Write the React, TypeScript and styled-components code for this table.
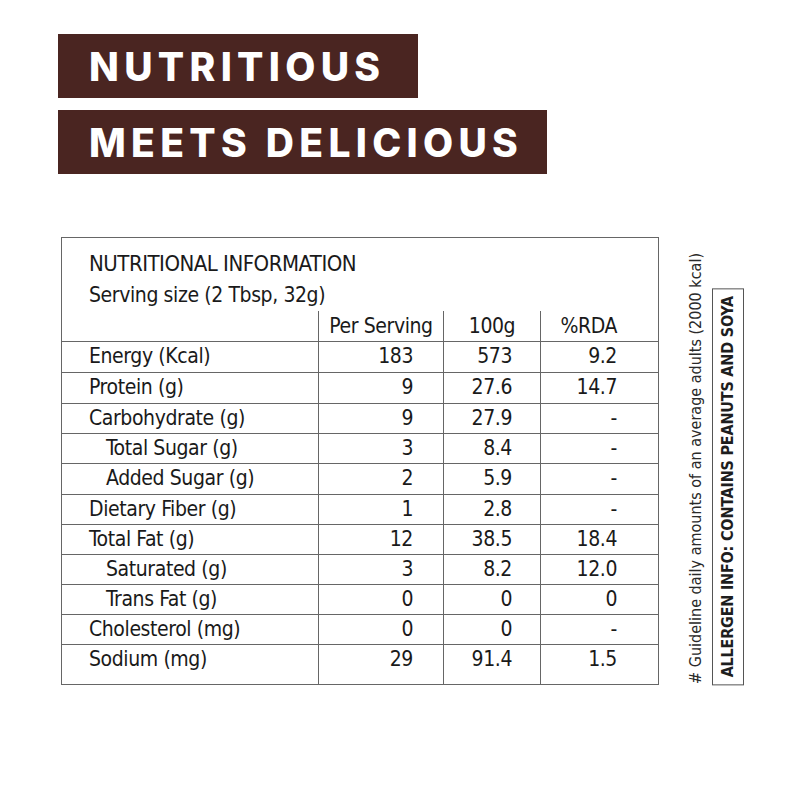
import React from 'react'
import styled, { createGlobalStyle } from 'styled-components'

const Global = createGlobalStyle`
  html, body {
    margin: 0;
    padding: 0;
    background: #ffffff;
  }
`

const condensed = `"Liberation Sans Narrow", "DejaVu Sans Condensed", "Roboto Condensed", "Liberation Sans", sans-serif`

type Row = { label: string; sub?: boolean; serving: string; g100: string; rda: string }

const rows: Row[] = [
  { label: 'Energy (Kcal)', serving: '183', g100: '573', rda: '9.2' },
  { label: 'Protein (g)', serving: '9', g100: '27.6', rda: '14.7' },
  { label: 'Carbohydrate (g)', serving: '9', g100: '27.9', rda: '-' },
  { label: 'Total Sugar (g)', sub: true, serving: '3', g100: '8.4', rda: '-' },
  { label: 'Added Sugar (g)', sub: true, serving: '2', g100: '5.9', rda: '-' },
  { label: 'Dietary Fiber (g)', serving: '1', g100: '2.8', rda: '-' },
  { label: 'Total Fat (g)', serving: '12', g100: '38.5', rda: '18.4' },
  { label: 'Saturated (g)', sub: true, serving: '3', g100: '8.2', rda: '12.0' },
  { label: 'Trans Fat (g)', sub: true, serving: '0', g100: '0', rda: '0' },
  { label: 'Cholesterol (mg)', serving: '0', g100: '0', rda: '-' },
  { label: 'Sodium (mg)', serving: '29', g100: '91.4', rda: '1.5' },
]

export default function App() {
  return (
    <Page>
      <Global />
      <Banners>
        <Banner $width={360}>NUTRITIOUS</Banner>
        <Banner $width={489}>MEETS DELICIOUS</Banner>
      </Banners>
      <Content>
        <Panel>
          <Title>
            <Heading>NUTRITIONAL INFORMATION</Heading>
            <Serving>Serving size (2 Tbsp, 32g)</Serving>
          </Title>
          <Grid>
            <HeadCell $first />
            <HeadCell $align="center">Per Serving</HeadCell>
            <HeadCell $align="center">100g</HeadCell>
            <HeadCell $align="right" $pad={41}>%RDA</HeadCell>
            {rows.map((r) => (
              <React.Fragment key={r.label}>
                <Label $sub={r.sub}>{r.label}</Label>
                <Num $pad={30}>{r.serving}</Num>
                <Num $pad={28}>{r.g100}</Num>
                <Num $pad={41}>{r.rda}</Num>
              </React.Fragment>
            ))}
          </Grid>
        </Panel>
        <Side>
          <Note># Guideline daily amounts of an average adults (2000 kcal)</Note>
          <Allergen>ALLERGEN INFO: CONTAINS PEANUTS AND SOYA</Allergen>
        </Side>
      </Content>
    </Page>
  )
}

const Page = styled.div`
  width: 800px;
  height: 800px;
  box-sizing: border-box;
  padding: 34px 0 0 58px;
  background: #ffffff;
`
const Banners = styled.div`
  display: flex;
  flex-direction: column;
  gap: 12px;
`
const Banner = styled.div<{ $width: number }>`
  width: ${(p) => p.$width}px;
  height: 64px;
  box-sizing: border-box;
  padding-left: 31px;
  display: flex;
  align-items: center;
  background: #4a2521;
  color: #ffffff;
  font-family: Inter, "DejaVu Sans", sans-serif;
  font-weight: 800;
  font-size: 39px;
  letter-spacing: 5.3px;
  white-space: nowrap;
`
const Content = styled.div`
  display: flex;
  align-items: flex-end;
  margin: 63px 0 0 3px;
`
const Panel = styled.div`
  width: 598px;
  box-sizing: border-box;
  border: 1px solid #666666;
  color: #1a1a1a;
  font-family: ${condensed};
`
const Title = styled.div`
  height: 73px;
  box-sizing: border-box;
  padding: 9px 0 0 27px;
`
const Heading = styled.div`
  font-size: 22px;
  line-height: 33px;
  letter-spacing: -0.5px;
`
const Serving = styled.div`
  font-size: 21px;
  line-height: 31px;
  letter-spacing: -0.4px;
`
const Grid = styled.div`
  display: grid;
  grid-template-columns: 256px 125px 97px 118px;
  grid-template-rows: 30px 31px 31px 30px 30px 31px 30px 30px 30px 30px 30px 40px;
  font-size: 21px;
  letter-spacing: -0.4px;
`
const HeadCell = styled.div<{ $first?: boolean; $align?: string; $pad?: number }>`
  border-left: ${(p) => (p.$first ? 'none' : '1px solid #666666')};
  text-align: ${(p) => p.$align || 'left'};
  padding-right: ${(p) => p.$pad || 0}px;
  line-height: 30px;
`
const Label = styled.div<{ $sub?: boolean }>`
  border-top: 1px solid #666666;
  padding-left: ${(p) => (p.$sub ? 44 : 27)}px;
  line-height: 29px;
  white-space: nowrap;
`
const Num = styled.div<{ $pad: number }>`
  border-top: 1px solid #666666;
  border-left: 1px solid #666666;
  text-align: right;
  padding-right: ${(p) => p.$pad}px;
  line-height: 29px;
`
const Side = styled.div`
  display: flex;
  align-items: flex-end;
  gap: 9px;
  margin-left: 29px;
`
const Note = styled.div`
  writing-mode: vertical-rl;
  transform: rotate(180deg);
  font-family: ${condensed};
  font-size: 16px;
  line-height: 15px;
  color: #2a2a2a;
  white-space: nowrap;
  margin-bottom: 1px;
`
const Allergen = styled.div`
  writing-mode: vertical-rl;
  transform: rotate(180deg);
  border: 1px solid #555555;
  padding: 7px 4px;
  font-family: ${condensed};
  font-weight: 700;
  font-size: 16px;
  line-height: 22px;
  letter-spacing: -0.2px;
  color: #1e1e1e;
  white-space: nowrap;
`
